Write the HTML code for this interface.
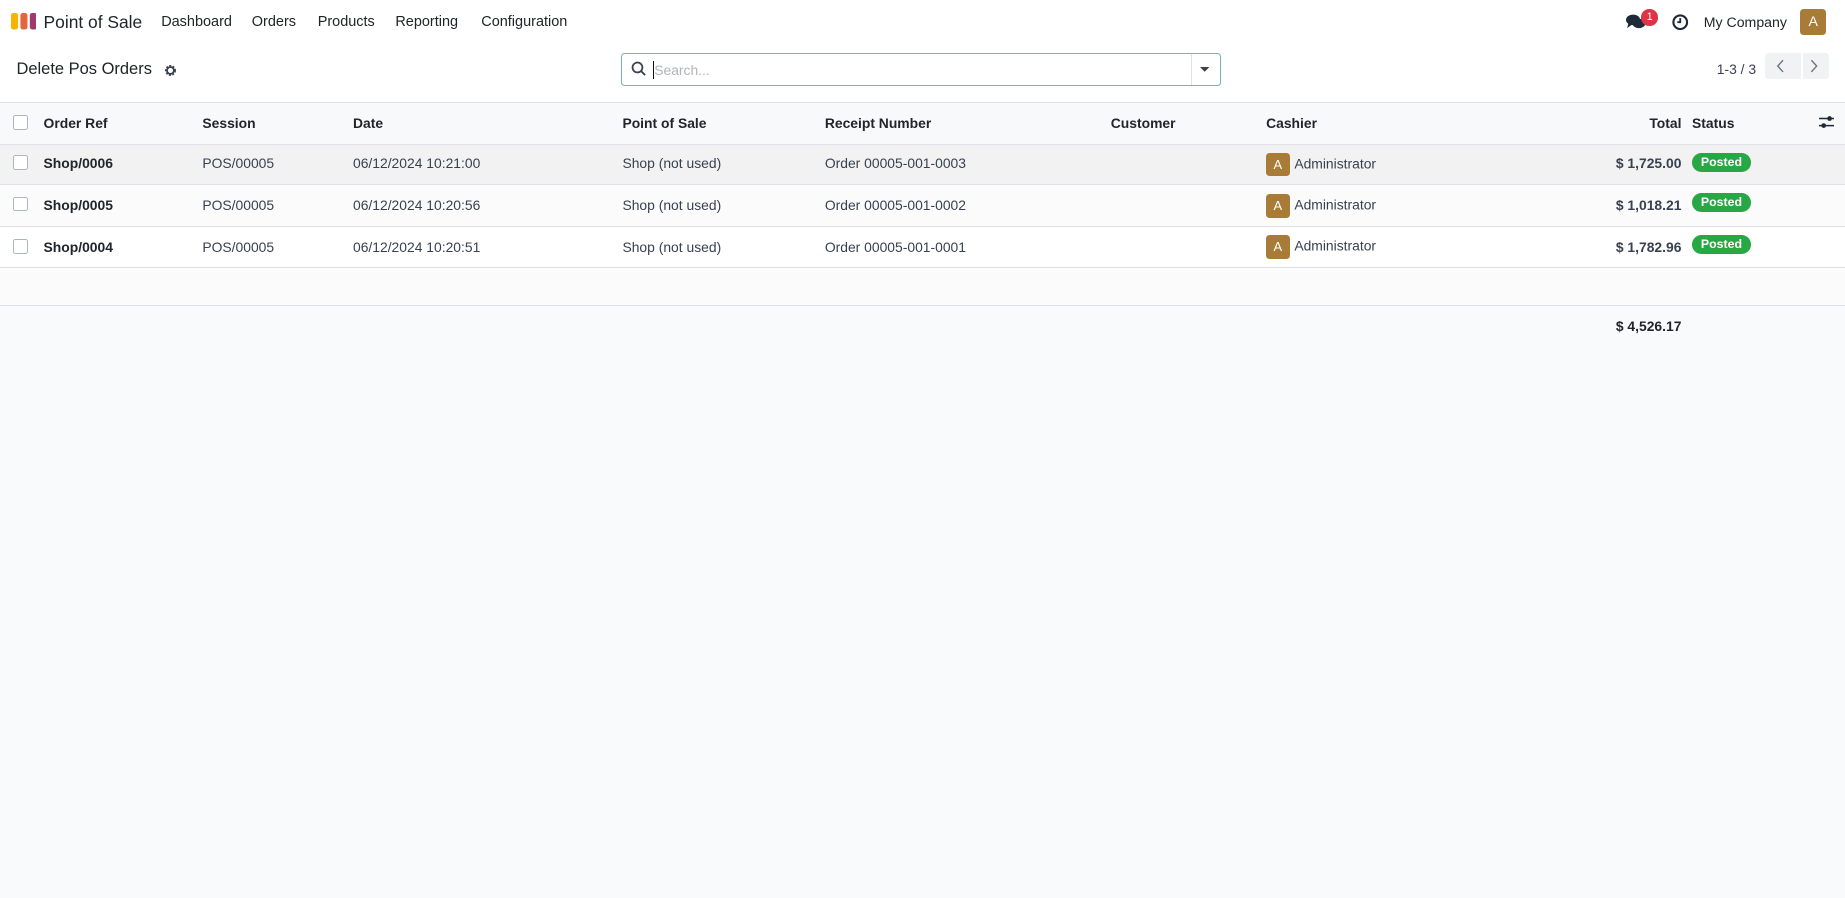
<!DOCTYPE html>
<html><head><meta charset="utf-8"><style>
html,body{margin:0;padding:0;}
body{width:1568px;height:763px;zoom:1.17666;background:#f9fafb;font-family:"Liberation Sans",sans-serif;font-size:11.8px;color:#374151;position:relative;overflow:hidden;}
.a{position:absolute;white-space:nowrap;}
.b{font-weight:bold;color:#212529;}
.row{position:absolute;left:0;width:1568px;border-bottom:1px solid #dee2e6;}
.cb{position:absolute;left:11px;width:11px;height:11px;border:1px solid #adb5bd;border-radius:2px;background:#fff;}
.av{display:inline-block;width:20px;height:20px;background:#a87b37;color:#fff;border-radius:3px;text-align:center;line-height:20px;font-size:11px;vertical-align:middle;margin-right:4px;}
.pill{position:absolute;left:1438px;width:50px;height:16px;background:#28a745;color:#fff;border-radius:8px;font-size:10.5px;font-weight:bold;text-align:center;line-height:16px;}
.n{position:absolute;top:12px;color:#212529;font-size:12.3px;white-space:nowrap;}
</style></head><body>
<div class="a" style="left:0;top:0;width:1568px;height:87px;background:#fff;border-bottom:1px solid #dee2e6;"></div>
<svg class="a" style="left:9px;top:11px" width="22" height="16" viewBox="0 0 22 16"><rect x="0" y="0" width="6" height="14" rx="2" fill="#f5b400"/><rect x="8" y="0" width="6" height="14" rx="2" fill="#e6663c"/><rect x="16" y="0" width="6" height="14" rx="2" fill="#a03a6b"/></svg>
<div class="a" style="left:37px;top:10px;font-size:14.8px;color:#212529;">Point of Sale</div>
<div class="n" style="left:137px;">Dashboard</div>
<div class="n" style="left:214px;">Orders</div>
<div class="n" style="left:270px;">Products</div>
<div class="n" style="left:336px;">Reporting</div>
<div class="n" style="left:409px;">Configuration</div>
<svg class="a" style="left:1382px;top:12px" width="17" height="14" viewBox="0 0 17 14"><ellipse cx="6" cy="5" rx="6" ry="4.5" fill="#1f2937"/><ellipse cx="11" cy="8" rx="5.5" ry="4" fill="#1f2937"/><path d="M2 8 L1 12 L5 9Z" fill="#1f2937"/></svg>
<div class="a" style="left:1395px;top:8px;width:14px;height:14px;border-radius:7px;background:#dc3545;color:#fff;font-size:9px;text-align:center;line-height:14px;">1</div>
<svg class="a" style="left:1421px;top:12px" width="14" height="14" viewBox="0 0 14 14"><circle cx="7" cy="7" r="5.8" fill="none" stroke="#1f2937" stroke-width="1.8"/><path d="M7 3.5V7H4.5" fill="none" stroke="#1f2937" stroke-width="1.6"/></svg>
<div class="n" style="left:1448px;font-size:12px">My Company</div>
<div class="a" style="left:1530px;top:8px;width:22px;height:22px;background:#a87b37;color:#fff;border-radius:3px;text-align:center;line-height:22px;font-size:12px;">A</div>

<div class="a" style="left:14px;top:51px;font-size:14px;color:#212529;">Delete Pos Orders</div>
<svg class="a" style="left:139px;top:54px" width="11" height="11" viewBox="0 0 12 12"><circle cx="6" cy="6" r="3.8" fill="none" stroke="#374151" stroke-width="2.6" stroke-dasharray="1.6 1.2"/><circle cx="6" cy="6" r="3.2" fill="none" stroke="#374151" stroke-width="1.6"/></svg>
<div class="a" style="left:528px;top:45px;width:508px;height:26px;border:1px solid #71b7b0;border-radius:3px;background:#fff;"></div>
<div class="a" style="left:1012px;top:46px;width:1px;height:26px;background:#dee2e6;"></div>
<svg class="a" style="left:536px;top:52px" width="13" height="13" viewBox="0 0 13 13"><circle cx="5.5" cy="5.5" r="4.2" fill="none" stroke="#374151" stroke-width="1.5"/><path d="M8.5 8.5L12 12" stroke="#374151" stroke-width="1.6"/></svg>
<div class="a" style="left:555px;top:52px;width:1px;height:15px;background:#111;"></div>
<div class="a" style="left:556px;top:53px;color:#b0b4ba;font-size:11.8px">Search...</div>
<svg class="a" style="left:1020px;top:57px" width="9" height="5"><path d="M0 0H8L4 4Z" fill="#374151"/></svg>
<div class="a" style="left:1459px;top:52px;color:#374151;font-size:11.8px">1-3 / 3</div>
<div class="a" style="left:1500px;top:45px;width:31px;height:22px;background:#f0f2f4;border-radius:3px 0 0 3px"></div>
<div class="a" style="left:1532px;top:45px;width:22px;height:22px;background:#f0f2f4;border-radius:0 3px 3px 0"></div>
<svg class="a" style="left:1509px;top:50px" width="8" height="12"><path d="M6 1L1.5 6L6 11" fill="none" stroke="#6b7280" stroke-width="1.2"/></svg>
<svg class="a" style="left:1537px;top:50px" width="8" height="12"><path d="M2 1L6.5 6L2 11" fill="none" stroke="#6b7280" stroke-width="1.2"/></svg>

<div class="row" style="top:88px;height:34px;background:#f8f9fa;"></div>
<div class="row" style="top:123px;height:33px;background:#f2f2f2;"></div>
<div class="row" style="top:157px;height:35px;background:#fbfbfb;"></div>
<div class="row" style="top:193px;height:34px;background:#fff;"></div>
<div class="row" style="top:228px;height:31px;background:#fbfbfb;"></div>

<div class="cb" style="top:98px"></div>
<div class="a b" style="left:37px;top:98px">Order Ref</div>
<div class="a b" style="left:172px;top:98px">Session</div>
<div class="a b" style="left:300px;top:98px">Date</div>
<div class="a b" style="left:529px;top:98px">Point of Sale</div>
<div class="a b" style="left:701px;top:98px">Receipt Number</div>
<div class="a b" style="left:944px;top:98px">Customer</div>
<div class="a b" style="left:1076px;top:98px">Cashier</div>
<div class="a b" style="left:1360px;width:69px;text-align:right;top:98px">Total</div>
<div class="a b" style="left:1438px;top:98px">Status</div>
<svg class="a" style="left:1546px;top:98px" width="13" height="12" viewBox="0 0 13 12"><path d="M0 3H13M0 9H13" stroke="#1f2937" stroke-width="1.3"/><circle cx="9" cy="3" r="2" fill="#1f2937"/><circle cx="4" cy="9" r="2" fill="#1f2937"/></svg>

<div class="cb" style="top:132px"></div>
<div class="a b" style="left:37px;top:132px">Shop/0006</div>
<div class="a" style="left:172px;top:132px">POS/00005</div>
<div class="a" style="left:300px;top:132px">06/12/2024 10:21:00</div>
<div class="a" style="left:529px;top:132px">Shop (not used)</div>
<div class="a" style="left:701px;top:132px">Order 00005-001-0003</div>
<div class="a" style="left:1076px;top:130px"><span class="av">A</span>Administrator</div>
<div class="a b" style="left:1330px;width:99px;text-align:right;top:132px;color:#374151">$ 1,725.00</div>
<div class="pill" style="top:130px">Posted</div>

<div class="cb" style="top:167px"></div>
<div class="a b" style="left:37px;top:167px">Shop/0005</div>
<div class="a" style="left:172px;top:167px">POS/00005</div>
<div class="a" style="left:300px;top:167px">06/12/2024 10:20:56</div>
<div class="a" style="left:529px;top:167px">Shop (not used)</div>
<div class="a" style="left:701px;top:167px">Order 00005-001-0002</div>
<div class="a" style="left:1076px;top:165px"><span class="av">A</span>Administrator</div>
<div class="a b" style="left:1330px;width:99px;text-align:right;top:167px;color:#374151">$ 1,018.21</div>
<div class="pill" style="top:164px">Posted</div>

<div class="cb" style="top:203px"></div>
<div class="a b" style="left:37px;top:203px">Shop/0004</div>
<div class="a" style="left:172px;top:203px">POS/00005</div>
<div class="a" style="left:300px;top:203px">06/12/2024 10:20:51</div>
<div class="a" style="left:529px;top:203px">Shop (not used)</div>
<div class="a" style="left:701px;top:203px">Order 00005-001-0001</div>
<div class="a" style="left:1076px;top:200px"><span class="av">A</span>Administrator</div>
<div class="a b" style="left:1330px;width:99px;text-align:right;top:203px;color:#374151">$ 1,782.96</div>
<div class="pill" style="top:200px">Posted</div>

<div class="a b" style="left:1330px;width:99px;text-align:right;top:270px">$ 4,526.17</div>
</body></html>
